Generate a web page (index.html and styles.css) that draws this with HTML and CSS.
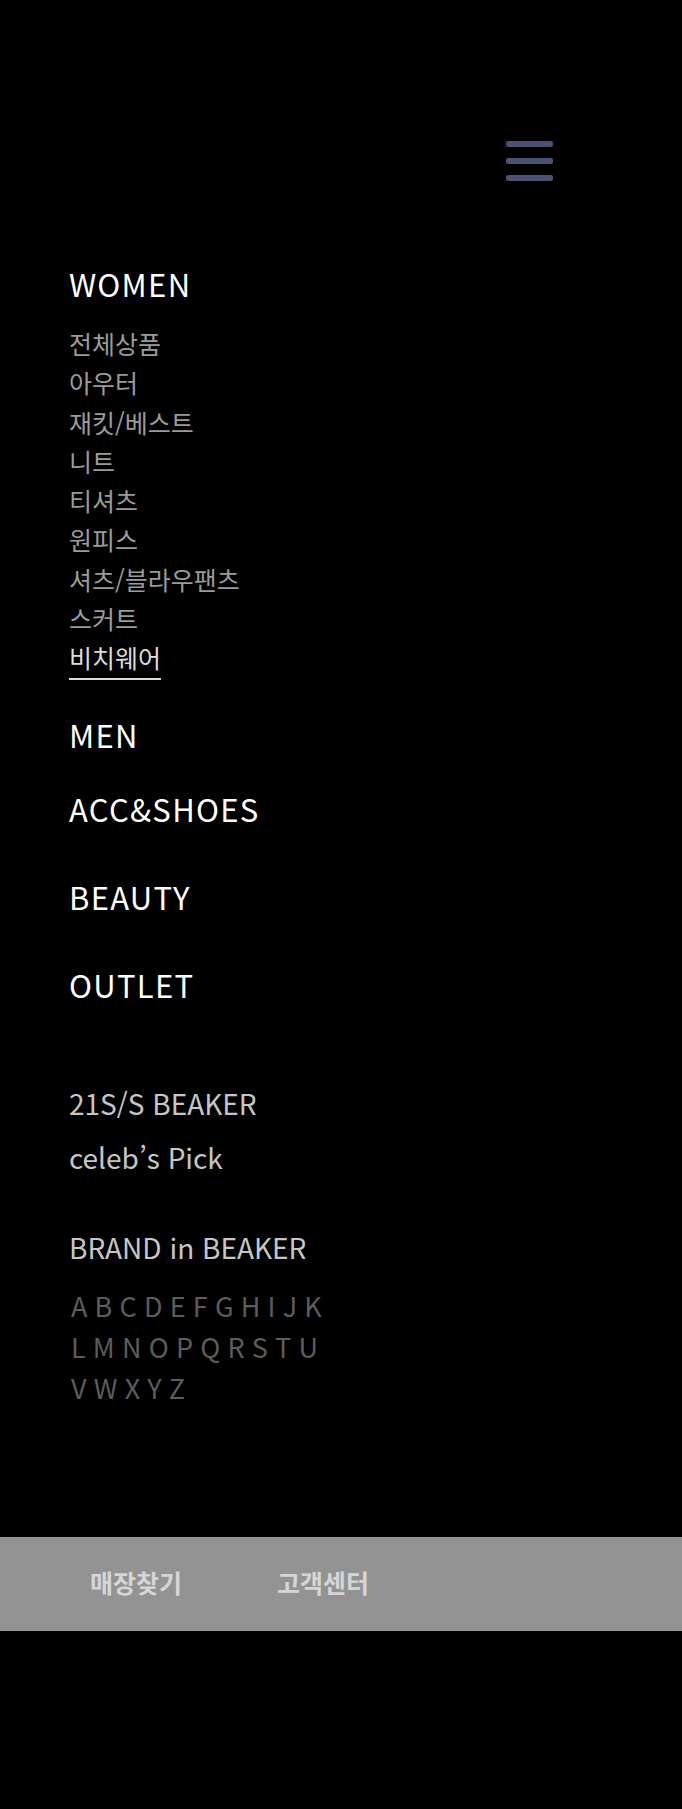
FILE: index.html
```html
<!DOCTYPE html>
<html lang="ko">
<head>
<meta charset="utf-8">
<title>BEAKER menu</title>
<link rel="stylesheet" href="styles.css">
</head>
<body>
<div class="drawer">
  <header class="drawer-head">
    <button class="burger" aria-label="menu">
      <span class="bar"></span><span class="bar"></span><span class="bar"></span>
    </button>
  </header>
  <nav class="gnb">
    <ul class="cats">
      <li class="cat cat-women">
        <a class="cat-title">WOMEN</a>
        <ul class="subs">
          <li><a class="sub">전체상품</a></li>
          <li><a class="sub">아우터</a></li>
          <li><a class="sub">재킷/베스트</a></li>
          <li><a class="sub">니트</a></li>
          <li><a class="sub">티셔츠</a></li>
          <li><a class="sub">원피스</a></li>
          <li><a class="sub">셔츠/블라우팬츠</a></li>
          <li><a class="sub">스커트</a></li>
          <li><a class="sub active">비치웨어</a></li>
        </ul>
      </li>
      <li class="cat cat-men"><a class="cat-title">MEN</a></li>
      <li class="cat cat-acc"><a class="cat-title">ACC&amp;SHOES</a></li>
      <li class="cat cat-wide"><a class="cat-title">BEAUTY</a></li>
      <li class="cat cat-wide"><a class="cat-title">OUTLET</a></li>
    </ul>
    <ul class="extra">
      <li><a class="extra-link">21S/S BEAKER</a></li>
      <li><a class="extra-link">celeb’s Pick</a></li>
    </ul>
    <div class="brand">
      <p class="brand-title">BRAND in BEAKER</p>
      <div class="abc">
        <div class="abc-row"><a>A</a><a>B</a><a>C</a><a>D</a><a>E</a><a>F</a><a>G</a><a>H</a><a>I</a><a>J</a><a>K</a></div>
        <div class="abc-row"><a>L</a><a>M</a><a>N</a><a>O</a><a>P</a><a>Q</a><a>R</a><a>S</a><a>T</a><a>U</a></div>
        <div class="abc-row"><a>V</a><a>W</a><a>X</a><a>Y</a><a>Z</a></div>
      </div>
    </div>
  </nav>
  <footer class="drawer-foot">
    <a class="foot-link">매장찾기</a>
    <a class="foot-link">고객센터</a>
  </footer>
</div>
</body>
</html>
```
FILE: styles.css
```css
* { box-sizing: border-box; }
html, body {
  margin: 0;
  padding: 0;
  background: #000;
}
body {
  width: 682px;
  min-height: 1809px;
  font-family: "Noto Sans CJK KR", "Noto Sans", sans-serif;
  color: #fff;
}
ul { list-style: none; margin: 0; padding: 0; }
a { text-decoration: none; color: inherit; }
p { margin: 0; }

.drawer-head {
  display: flex;
  padding: 141px 0 0 506px;
  height: 264px;
}
.burger {
  display: flex;
  flex-direction: column;
  gap: 11.3px;
  width: 47px;
  padding: 0;
  margin: 0;
  border: 0;
  background: none;
  height: 40px;
}
.bar {
  display: block;
  width: 47px;
  height: 6px;
  border-radius: 2px;
  background: #4b5170;
}

.gnb { padding-left: 69px; }

.cat-title {
  display: block;
  font-size: 31px;
  line-height: 40px;
  letter-spacing: 1.3px;
  color: #fff;
}
.subs {
  margin-top: 20px;
}
.subs li { display: flex; }
.sub {
  font-size: 25px;
  line-height: 39.25px;
  color: #9b9b9b;
}
.sub.active {
  color: #dcdcdc;
  padding-bottom: 1px;
  border-bottom: 2px solid #dcdcdc;
}
.cat-men { margin-top: 34.5px; }
.cat-acc { margin-top: 34px; }
.cat-wide { margin-top: 48px; }

.extra {
  margin-top: 70.8px;
}
.extra-link {
  display: block;
  font-size: 28px;
  line-height: 54px;
  color: #c6c6c6;
}
.brand { margin-top: 37.5px; }
.brand-title {
  font-size: 28px;
  line-height: 53px;
  color: #c6c6c6;
}
.abc {
  margin-top: 11.4px;
  padding-left: 2px;
}
.abc-row {
  display: flex;
  font-size: 27px;
  line-height: 41px;
  color: #5c5c5c;
}
.abc-row a { margin-right: 7.2px; }

.drawer-foot {
  display: flex;
  align-items: center;
  gap: 95px;
  margin-top: 128.3px;
  height: 94px;
  padding: 0 0 4px 90px;
  background: #939393;
}
.foot-link {
  font-size: 25px;
  font-weight: 700;
  color: #d6d6d6;
}
```
